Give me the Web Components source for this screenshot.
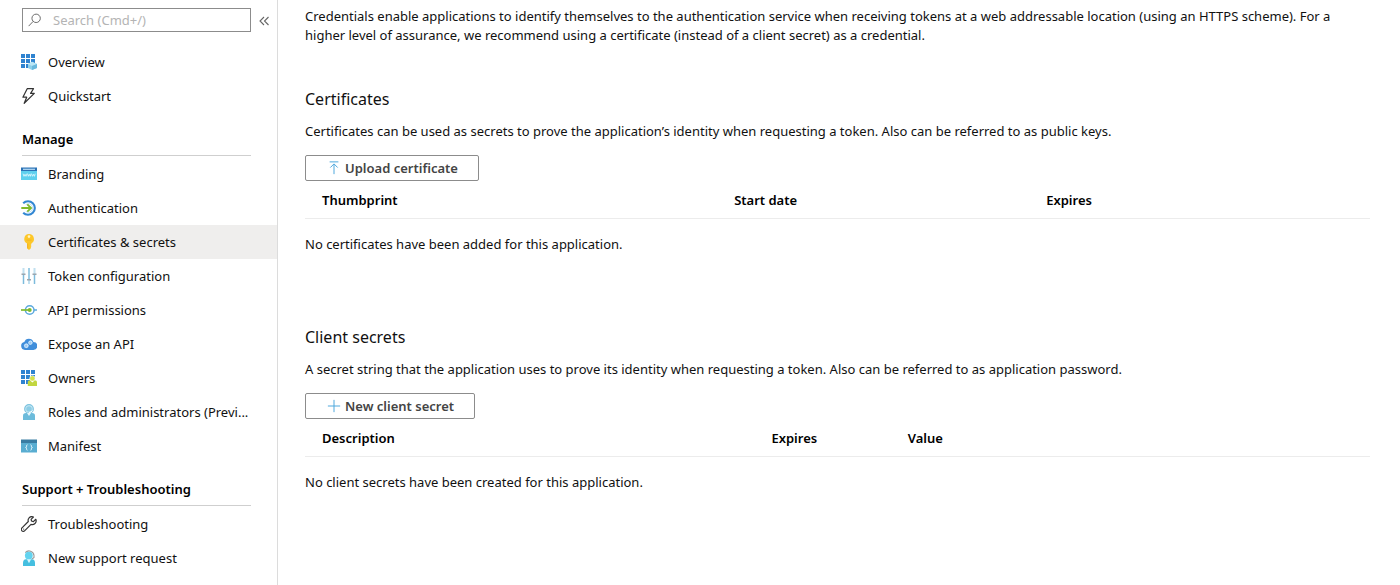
<!DOCTYPE html>
<html lang="en">
<head>
<meta charset="utf-8">
<meta name="viewport" content="width=device-width, initial-scale=1">
<title>Certificates &amp; secrets</title>
<style>
  body { margin: 0; background: #fff; color: #111; font: 13px/20px "Noto Sans", "Open Sans", sans-serif; }
</style>
</head>
<body>
<portal-shell>
  <portal-sidebar slot="nav">
    <nav-group>
      <nav-item icon="overview">Overview</nav-item>
      <nav-item icon="bolt">Quickstart</nav-item>
    </nav-group>
    <nav-group heading="Manage">
      <nav-item icon="branding">Branding</nav-item>
      <nav-item icon="auth">Authentication</nav-item>
      <nav-item icon="key" selected>Certificates &amp; secrets</nav-item>
      <nav-item icon="sliders">Token configuration</nav-item>
      <nav-item icon="api">API permissions</nav-item>
      <nav-item icon="cloud">Expose an API</nav-item>
      <nav-item icon="owners">Owners</nav-item>
      <nav-item icon="roles">Roles and administrators (Previ...</nav-item>
      <nav-item icon="manifest">Manifest</nav-item>
    </nav-group>
    <nav-group heading="Support + Troubleshooting">
      <nav-item icon="wrench">Troubleshooting</nav-item>
      <nav-item icon="support">New support request</nav-item>
    </nav-group>
  </portal-sidebar>
  <page-intro>Credentials enable applications to identify themselves to the authentication service when receiving tokens at a web addressable location (using an HTTPS scheme). For a higher level of assurance, we recommend using a certificate (instead of a client secret) as a credential.</page-intro>
  <credential-section heading="Certificates">
    <span slot="description">Certificates can be used as secrets to prove the application’s identity when requesting a token. Also can be referred to as public keys.</span>
    <command-button slot="action" icon="upload">Upload certificate</command-button>
    <credential-table columns="Thumbprint:38.7|Start date:29.3|Expires:32" empty="No certificates have been added for this application."></credential-table>
  </credential-section>
  <credential-section heading="Client secrets">
    <span slot="description">A secret string that the application uses to prove its identity when requesting a token. Also can be referred to as application password.</span>
    <command-button slot="action" icon="plus">New client secret</command-button>
    <credential-table columns="Description:42.2|Expires:12.8|Value:45" empty="No client secrets have been created for this application."></credential-table>
  </credential-section>
</portal-shell>

<script>
const grid = `<g fill="#2f83d0"><path d="M0 0h4v4H0zM5 0h4v4H5zM10 0h4v4h-4zM0 5h4v4H0zM5 5h4v4H5zM10 5h4v4h-4zM0 10h4v4H0zM5 10h4v4H5z"/></g>`;
const ICONS = {
  search: `<g fill="none" stroke="#666" stroke-width="1.1"><circle cx="9.3" cy="6.1" r="4.8"/><path d="M5.900 9.600.700 15"/></g>`,
  collapse: `<path d="M8 5 4 9l4 4M12.500 5l-4 4 4 4" fill="none" stroke="#666" stroke-width="1.1"/>`,
  overview: grid + `<path d="M11 7.800 16 10v4l-5 2-4-2v-4z" fill="#8fd0ea"/><path d="M11 7.800 16 10l-5 1.900L7 10z" fill="#bce6f5"/><path d="M11 11.900 16 10v4l-5 2z" fill="#6bb9dd"/>`,
  bolt: `<path d="M6.200.7h6.300L9.600 5.400h3.700L3.200 15.300l2.500-6.100H1.900z" fill="none" stroke="#333" stroke-width="1.2" stroke-linejoin="round"/>`,
  branding: `<path d="M0 2h16v12H0z" fill="#5fd0ee"/><path d="M0 1.500h16V5H0z" fill="#2b72b6"/><path d="M2 2.700h12v1.200H2z" fill="#b9dcf5"/><path d="m2 7.700 1 2.600 1-2 1 2 1-2.600m.500 0 .8 2.600 1-2 1 2 .7-2.600m.5 0 .9 2.600 1-2 1 2 .8-2.600" fill="none" stroke="#e9fbff" stroke-width=".8"/>`,
  auth: `<path d="M2.200 3.200a6.800 6.800 0 1 1 0 9.600" fill="none" stroke="#3287d3" stroke-width="2.100"/><path d="M4.800 4.600a4.300 4.300 0 1 1 0 6.800" fill="none" stroke="#a9d4f1" stroke-width=".7"/><path d="M.3 8H9.800M6.300 4.300 10.100 8l-3.800 3.700" fill="none" stroke="#7fba2d" stroke-width="1.800"/>`,
  key: `<path d="M8 0a5 5 0 0 1 2.500 9.300V10l-.8 1 .8 1-.8 1 .4 1L8 16l-1.900-1.800V9.500A5 5 0 0 1 8 0z" fill="#fdc729"/><path d="M6.200 9.500h1v5.500L6.200 14z" fill="#efb022"/><path d="M5.500 5.700h5v.8h-5z" fill="#eeb023"/><circle cx="8" cy="2.600" r="1.300" fill="#fff3c4"/>`,
  sliders: `<path d="M1.500 0h2v16h-2zM7 0h2v16H7zM12.500 0h2v16h-2z" fill="#c0e0f0"/><path d="M2 7h1v9H2zM7.500 0h1v11h-1zM13 7h1v9h-1z" fill="#7dbbdc"/><path d="M.5 5.500h4V7h-4zM6 11h4v1.500H6zM11.500 5.500h4V7h-4z" fill="#9aa5ae"/>`,
  api: `<circle cx="8.700" cy="8" r="4.300" fill="none" stroke="#5aa8dd" stroke-width="1.500"/><path d="M13 8h3" stroke="#5aa8dd" stroke-width="1.500"/><path d="M0 8h7" stroke="#7fba2d" stroke-width="1.700"/><circle cx="8.700" cy="8" r="2" fill="#7fba2d"/>`,
  cloud: `<path d="M4 14a4 4 0 0 1-.7-7.900A4.800 4.800 0 0 1 12.400 6a4 4 0 0 1-.2 8z" fill="#408edb"/><g fill="none" stroke="#c9e4fb"><circle cx="5.300" cy="9.700" r="1.600" stroke-width="1.400"/><circle cx="9.400" cy="6.700" r="1.500" stroke-width="1.300"/></g><path d="M5.300 7.200v5M2.800 9.700h5M9.400 4.400v4.600M7.100 6.700h4.600" stroke="#c9e4fb" stroke-width=".5"/>`,
  owners: grid + `<path d="M6.800 16v-3.600c0-1.300.9-2.200 2.200-2.200h4.800c1.300 0 2.200.9 2.200 2.200V16z" fill="#c2d63f"/><circle cx="11.400" cy="8.400" r="2.700" fill="#d4e04a" stroke="#fff" stroke-width=".6"/><path d="m9.800 11 1.600 1.600L13 11z" fill="#fff"/>`,
  roles: `<circle cx="8" cy="4.900" r="4.300" fill="#c9e9f5" stroke="#7cc3df" stroke-width="1.200"/><path d="M2 16v-4.200c0-2 1-2.800 3-2.800h6c2 0 3 .8 3 2.800V16z" fill="#6cbbdb"/><circle cx="8" cy="5" r="2.800" fill="#8dcde5"/><path d="m6 9 2 3 2-3z" fill="#e8f7fc"/><path d="M11.500 6.500Q10.500 8.500 8 8.500" fill="none" stroke="#fff" stroke-width="1"/>`,
  manifest: `<path d="M0 2h16v12.500H0z" fill="#59add1"/><path d="M0 1.500h16V5H0z" fill="#397ca2"/><path d="M6.500 6.800c-1 0-.9.400-.9 1.400 0 .8-.2 1.300-1 1.300.8 0 1 .5 1 1.300 0 1-.1 1.400.9 1.400M9.500 6.800c1 0 .9.400.9 1.400 0 .8.200 1.300 1 1.300-.8 0-1 .5-1 1.300 0 1 .1 1.400-.9 1.400" fill="none" stroke="#e4f5fc"/>`,
  wrench: `<path d="M14.800 3.300 12.400 5.600 10.500 5 10.100 3.300 12.400 1C10.500.2 8.500.9 7.600 2.500c-.6 1-.6 2-.3 3L1 11.900c-.9.900-.9 2.100-.1 2.900.8.800 2 .7 2.900-.2l6.200-6.200c1.300.4 2.900.1 4-.9 1.200-1.100 1.400-2.800.8-4.200z" fill="none" stroke="#333" stroke-width="1.200" stroke-linejoin="round"/><circle cx="2.700" cy="13.100" r=".6" fill="#333"/>`,
  support: `<path d="M4.300 2.600A5 5 0 0 1 13 5.500v2L11 9" fill="none" stroke="#9a9a9a" stroke-width="1.100"/><path d="M2 16v-3c0-2.300 1-3.700 3-3.700h6c2 0 3 1.400 3 3.700v3z" fill="#45bfe0"/><circle cx="7.800" cy="5.600" r="3.900" fill="#63d3ef"/><path d="m5.900 9.300 2.100 4 2.100-4z" fill="#d9f6fd"/>`,
  upload: `<path d="M3 1h10M8 15V3.500M3.800 7.500 8 3.300 12.200 7.500" fill="none" stroke="#4aa5dc" stroke-width="1.100"/>`,
  plus: `<path d="M8 1v14M1 8h14" fill="none" stroke="#4aa5dc" stroke-width="1.100"/>`
};

class BaseElement extends HTMLElement {
  constructor() { super(); this.attachShadow({ mode: "open" }); }
  connectedCallback() { this.shadowRoot.innerHTML = this.view(); }
  attr(name) { return this.getAttribute(name) || ""; }
}

customElements.define("ui-icon", class extends BaseElement {
  view() {
    return `<style>:host{display:block;flex:none;width:16px;height:16px}svg{display:block;width:100%;height:100%}</style>
      <svg viewBox="0 0 16 16" aria-hidden="true">${ICONS[this.attr("name")]}</svg>`;
  }
});

customElements.define("portal-shell", class extends BaseElement {
  view() {
    return `<style>
      :host{display:grid;grid-template-columns:278px minmax(0,1fr);min-height:100vh}
      main{padding:7px 30px 0 27px}
    </style><slot name="nav"></slot><main><slot></slot></main>`;
  }
});

customElements.define("portal-sidebar", class extends BaseElement {
  view() {
    return `<style>
      :host{display:block;box-sizing:border-box;border-right:1px solid #dcdcdc;padding-top:8px}
      .top{display:flex;align-items:center;gap:4px;padding:0 4px 0 22px;margin-bottom:13px}
      label{flex:1;min-width:0;box-sizing:border-box;height:24px;display:flex;align-items:center;gap:11px;padding-left:5px;border:1px solid #8c8c8c}
      .icon{width:14px;height:14px}
      input{flex:1;min-width:0;border:0;outline:0;padding:0;background:none;color:#111;font:inherit;line-height:20px}
      input::placeholder{color:#b4b4b4;opacity:1}
      button{border:0;background:none;padding:0;width:18px;display:grid;place-items:center}
    </style>
    <div class="top">
      <label><ui-icon class="icon" name="search"></ui-icon><input type="text" aria-label="Search" placeholder="Search (Cmd+/)"></label>
      <button type="button" aria-label="Collapse menu"><ui-icon name="collapse"></ui-icon></button>
    </div>
    <nav><slot></slot></nav>`;
  }
});

customElements.define("nav-group", class extends BaseElement {
  view() {
    const heading = this.attr("heading");
    return `<style>
      :host{display:block}
      h2{box-sizing:border-box;height:43px;margin:0 26px 1px 22px;padding-top:16px;border-bottom:1px solid #cfcfcf;font-size:13px;line-height:20px;font-weight:600;color:#000}
    </style>${heading ? `<h2>${heading}</h2>` : ""}<slot></slot>`;
  }
});

customElements.define("nav-item", class extends BaseElement {
  view() {
    return `<style>
      :host{display:block}
      a{display:flex;align-items:center;gap:11px;height:34px;padding-left:21px;color:inherit;text-decoration:none;white-space:nowrap}
      :host([selected]) a{background:#efeeed}
    </style><a href="#"${this.hasAttribute("selected") ? ' aria-current="page"' : ""}><ui-icon name="${this.attr("icon")}"></ui-icon><span><slot></slot></span></a>`;
  }
});

customElements.define("page-intro", class extends BaseElement {
  view() {
    return `<style>:host{display:block;margin-bottom:42px}p{margin:0;line-height:19px}</style><p><slot></slot></p>`;
  }
});

customElements.define("credential-section", class extends BaseElement {
  view() {
    return `<style>
      :host{display:block;margin-bottom:56px}
      h3{margin:0 0 10px;font-size:16px;line-height:24px;font-weight:400;color:#111}
      p{margin:0 0 14px}
    </style><section><h3>${this.attr("heading")}</h3><p><slot name="description"></slot></p><slot name="action"></slot><slot></slot></section>`;
  }
});

customElements.define("command-button", class extends BaseElement {
  view() {
    return `<style>
      :host{display:flex}
      button{display:flex;align-items:center;gap:4px;box-sizing:border-box;height:26px;padding:0 20px 0 21px;border:1px solid #8c8c8c;border-radius:2px;background:#fff;color:#444;font:inherit;font-weight:600}
      ui-icon{width:14px;height:14px}
    </style><button type="button"><ui-icon name="${this.attr("icon")}"></ui-icon><span><slot></slot></span></button>`;
  }
});

customElements.define("credential-table", class extends BaseElement {
  view() {
    const columns = this.attr("columns").split("|").map(c => c.split(":"));
    return `<style>
      :host{display:block}
      table{width:100%;table-layout:fixed;border-collapse:separate;border-spacing:0}
      th{box-sizing:border-box;height:38px;padding:0 0 0 17px;border-bottom:1px solid #ececec;text-align:left;font-weight:600;color:#000}
      td{height:50px;padding:0}
    </style><table>
      <colgroup>${columns.map(c => `<col style="width:${c[1]}%">`).join("")}</colgroup>
      <thead><tr>${columns.map(c => `<th scope="col">${c[0]}</th>`).join("")}</tr></thead>
      <tbody><tr><td colspan="${columns.length}">${this.attr("empty")}</td></tr></tbody>
    </table>`;
  }
});
</script>
</body>
</html>
